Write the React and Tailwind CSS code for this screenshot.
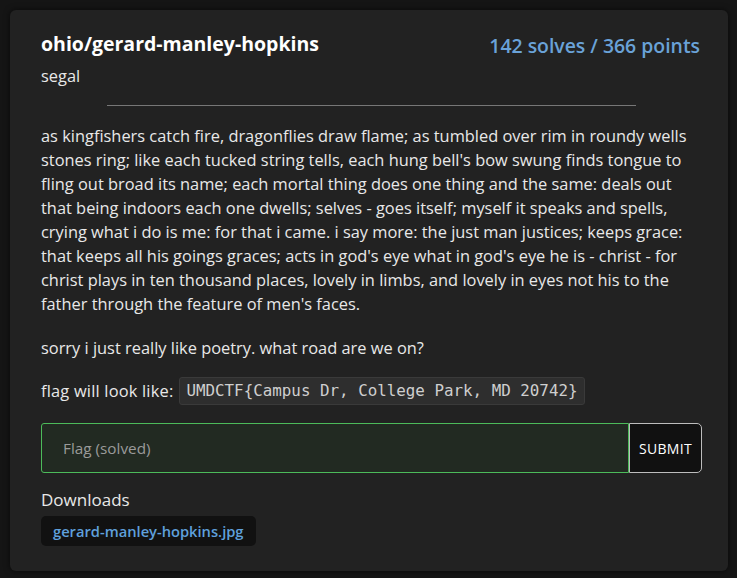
export default function App() {
  const font = { fontFamily: '"Open Sans", "Noto Sans", sans-serif' };
  return (
    <div className="min-h-[578px] w-full bg-[#151515] pt-[10px] pb-[6px] pl-[10px] pr-[9px]" style={font}>
      <div className="rounded-md bg-[#222222] pl-[31px] pr-[26px] pt-[20px] pb-[25px] text-[#e8e8e8] shadow-[0_0_6px_rgba(0,0,0,0.6)]">
        <div className="flex items-start justify-between">
          <div>
            <h1 className="text-[19.5px] font-bold leading-[28px] text-white">ohio/gerard-manley-hopkins</h1>
            <div className="mt-[6px] text-[16.4px] leading-[24px]">segal</div>
          </div>
          <div className="mr-[2px] mt-[2px] text-[19.4px] font-semibold leading-[28px] text-[#6aa2d8]">142 solves / 366 points</div>
        </div>
        <div className="mx-auto mt-[17px] h-px w-[80%] bg-[#777]" />
        <p className="mt-[18px] text-[16.4px] leading-[24px]">
          as kingfishers catch fire, dragonflies draw flame; as tumbled over rim in roundy wells stones ring; like each tucked string tells, each hung bell's bow swung finds tongue to fling out broad its name; each mortal thing does one thing and the same: deals out that being indoors each one dwells; selves - goes itself; myself it speaks and spells, crying what i do is me: for that i came. i say more: the just man justices; keeps grace: that keeps all his goings graces; acts in god's eye what in god's eye he is - christ - for christ plays in ten thousand places, lovely in limbs, and lovely in eyes not his to the father through the feature of men's faces.
        </p>
        <p className="mt-[20px] text-[16.4px] leading-[24px]">sorry i just really like poetry. what road are we on?</p>
        <div className="mt-[17px] flex items-center gap-[4px] text-[16.4px] leading-[24px]">
          <span className="tracking-[0.2px]">flag will look like:</span>
          <code
            className="ml-[2px] rounded-[3px] border border-[#3a3a3a] bg-[#2e2e2e] px-[6px] py-px text-[15.85px] leading-[24px] text-[#cfcfcf]"
            style={{ fontFamily: '"DejaVu Sans Mono", monospace' }}
          >
            UMDCTF{'{'}Campus Dr, College Park, MD 20742{'}'}
          </code>
        </div>
        <div className="mt-[18px] flex h-[50px]">
          <div className="flex flex-1 items-center rounded-l-[3px] border border-[#4cbb5a] bg-[#222a22] pl-[21px] text-[15.3px] text-[#9a9a9a]">
            Flag (solved)
          </div>
          <button className="w-[73px] rounded-r-[5px] border border-[#bdbdbd] bg-[#111] text-[14px] font-normal tracking-[0.3px] text-white">
            SUBMIT
          </button>
        </div>
        <div className="mt-[15px] text-[17px] leading-[24px]">Downloads</div>
        <div className="mt-[4px] inline-block rounded-[5px] bg-[#111111] px-[12px] py-[4px] text-[14.7px] font-semibold leading-[22px] text-[#5fa0dc]">
          gerard-manley-hopkins.jpg
        </div>
      </div>
    </div>
  );
}
